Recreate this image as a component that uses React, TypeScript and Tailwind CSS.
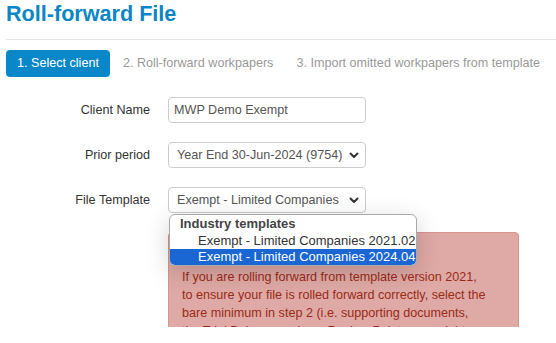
import { ReactNode } from "react";

function Chevron() {
  return (
    <svg width="10" height="7" viewBox="0 0 10 7" className="text-[#333]">
      <path d="M1.5 1.5 L5 5 L8.5 1.5" fill="none" stroke="currentColor" strokeWidth="2" strokeLinecap="round" strokeLinejoin="round" />
    </svg>
  );
}

function Row({ label, children }: { label: string; children: ReactNode }) {
  return (
    <div className="flex items-center gap-[18px]">
      <label className="w-[144px] text-right text-[#333]">{label}</label>
      {children}
    </div>
  );
}

function Select({ value }: { value: string }) {
  return (
    <div className="flex h-[26px] w-[198px] items-center justify-between rounded-[4px] border border-[#ccc] bg-white pl-[8px] pr-[6px] text-[#555]">
      <span className="whitespace-nowrap">{value}</span>
      <Chevron />
    </div>
  );
}

export default function App() {
  return (
    <div className="h-[327px] overflow-hidden bg-white px-[6px] font-['Liberation_Sans',Arial,sans-serif] text-[12.6px]">
      {/* Title */}
      <h1 className="pt-px text-[21.6px] font-bold leading-[26px] text-[#0a86c7]">Roll-forward File</h1>
      <div className="-mr-[6px] mt-[12px] h-px bg-[#e5e5e5]" />

      {/* Steps */}
      <nav className="mt-[10px] flex gap-[2px] whitespace-nowrap">
        <span className="flex h-[27px] shrink-0 items-center rounded-[4px] bg-[#0a87c9] px-[11px] text-white">1. Select client</span>
        <span className="flex h-[27px] shrink-0 items-center px-[11px] text-[#999]">2. Roll-forward workpapers</span>
        <span className="flex h-[27px] shrink-0 items-center px-[10px] text-[#999]">3. Import omitted workpapers from template</span>
      </nav>

      {/* Form */}
      <div className="mt-[20px] flex flex-col gap-[19px]">
        <Row label="Client Name">
          <div className="flex h-[26px] w-[198px] items-center rounded-[4px] border border-[#ccc] bg-white px-[5px] text-[#555]">
            MWP Demo Exempt
          </div>
        </Row>
        <Row label="Prior period">
          <Select value="Year End 30-Jun-2024 (9754)" />
        </Row>
        <Row label="File Template">
          <div className="relative">
            <Select value="Exempt - Limited Companies" />
            {/* Open dropdown */}
            <div className="absolute left-[1px] top-[27px] z-10 w-[248px] overflow-hidden rounded-[6px] border border-[#a9a9a9] bg-white text-[13px] text-[#333] shadow-[0_6px_24px_rgba(0,0,0,0.18)]">
              <div className="flex h-[17px] items-center pl-[10px] font-bold text-[#444]">Industry templates</div>
              <div className="flex h-[17px] items-center whitespace-nowrap pl-[28px]">Exempt - Limited Companies 2021.02</div>
              <div className="flex h-[16px] items-center whitespace-nowrap bg-[#1a66d3] pl-[28px] text-white">
                Exempt - Limited Companies 2024.04
              </div>
            </div>
          </div>
        </Row>
      </div>

      {/* Alert */}
      <div className="ml-[162px] mt-[19px] w-[351px] rounded-[4px] border border-[#d6958f] bg-[#dfa9a5] px-[13px] pb-[14px] pt-[35px] leading-[18px] text-[#972c19]">
        If you are rolling forward from template version 2021,
        <br />
        to ensure your file is rolled forward correctly, select the
        <br />
        bare minimum in step 2 (i.e. supporting documents,
        <br />
        the Trial Balance and any Review Points you might
      </div>
    </div>
  );
}
